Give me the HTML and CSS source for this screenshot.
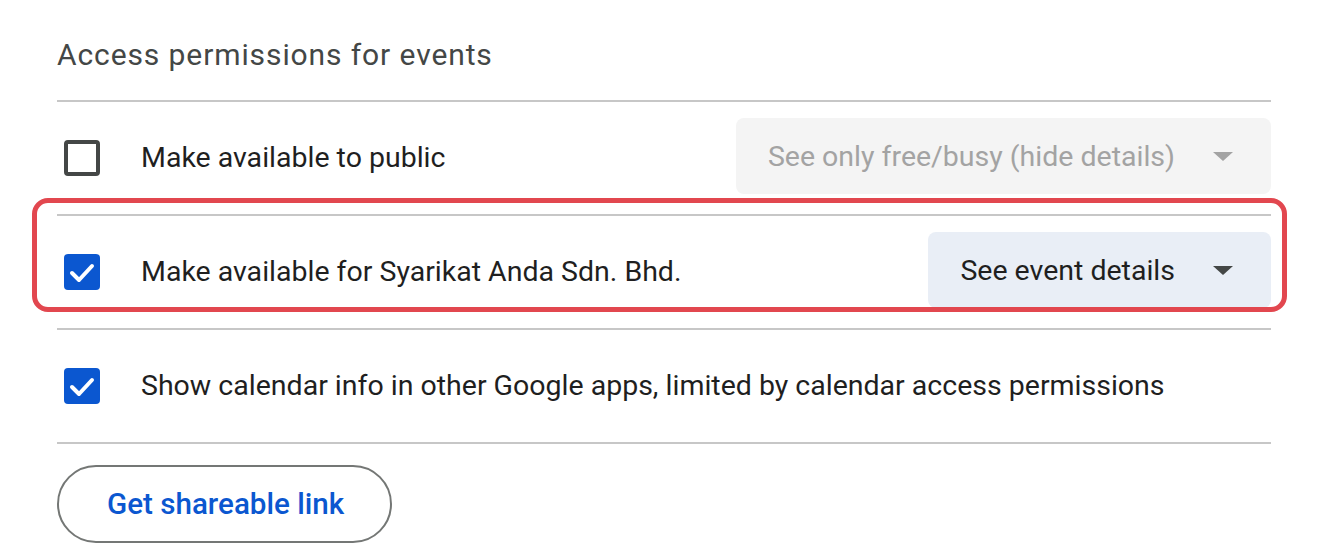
FILE: index.html
```html
<!DOCTYPE html>
<html lang="en">
<head>
<meta charset="utf-8">
<title>Access permissions for events</title>
<link rel="stylesheet" href="styles.css">
</head>
<body>
<section class="panel">
  <h2 class="title">Access permissions for events</h2>

  <div class="row">
    <span class="checkbox"></span>
    <span class="label">Make available to public</span>
    <div class="select select-disabled">
      <span class="select-text">See only free/busy (hide details)</span>
      <span class="caret"></span>
    </div>
  </div>

  <div class="row row-highlight">
    <span class="checkbox checked">
      <svg viewBox="0 0 36 36" width="36" height="36"><polyline points="8,19 15,26 28,12" fill="none" stroke="#fff" stroke-width="4" stroke-linecap="round" stroke-linejoin="round"/></svg>
    </span>
    <span class="label">Make available for Syarikat Anda Sdn. Bhd.</span>
    <div class="select select-active">
      <span class="select-text">See event details</span>
      <span class="caret"></span>
    </div>
  </div>

  <div class="row">
    <span class="checkbox checked">
      <svg viewBox="0 0 36 36" width="36" height="36"><polyline points="8,19 15,26 28,12" fill="none" stroke="#fff" stroke-width="4" stroke-linecap="round" stroke-linejoin="round"/></svg>
    </span>
    <span class="label">Show calendar info in other Google apps, limited by calendar access permissions</span>
  </div>

  <div class="footer">
    <button class="link-btn" type="button">Get shareable link</button>
  </div>
</section>
</body>
</html>
```

FILE: styles.css
```css
* { box-sizing: border-box; }

html, body {
  margin: 0;
  padding: 0;
  background: #ffffff;
}

body {
  font-family: Roboto, "Noto Sans", Arial, sans-serif;
  color: #1f1f1f;
  width: 1320px;
  height: 560px;
  overflow: hidden;
}

.panel {
  margin-left: 57px;
  width: 1214px;
}

.title {
  margin: 0;
  padding-top: 37px;
  height: 100px;
  font-size: 30px;
  line-height: 36px;
  letter-spacing: 0.9px;
  font-weight: 400;
  color: #444746;
}

.row {
  display: flex;
  align-items: center;
  height: 114px;
  border-top: 2px solid #c7c7c7;
}

.row-highlight {
  position: relative;
}

.row-highlight::after {
  content: "";
  position: absolute;
  top: -18px;
  left: -25px;
  right: -16px;
  bottom: 16px;
  border: 5px solid #e2474f;
  border-radius: 16px;
  pointer-events: none;
}

.checkbox {
  flex: none;
  width: 36px;
  height: 36px;
  margin-left: 7px;
  margin-right: 41px;
  border: 4px solid #444746;
  border-radius: 4px;
  display: flex;
  align-items: center;
  justify-content: center;
}

.checkbox.checked {
  border: none;
  background: #0b57d0;
}

.label {
  font-size: 28.5px;
  line-height: 36px;
  white-space: nowrap;
}

.select {
  margin-left: auto;
  margin-top: -4px;
  height: 76px;
  display: flex;
  align-items: center;
  padding: 0 38px 0 32px;
  border-radius: 8px;
  font-size: 28.5px;
}

.select-text {
  white-space: nowrap;
}

.select-disabled {
  background: #f4f4f4;
  color: #a3a3a3;
}

.select-active {
  background: #e9eef6;
  color: #1f1f1f;
}

.caret {
  margin-left: 38px;
  width: 0;
  height: 0;
  border-left: 10px solid transparent;
  border-right: 10px solid transparent;
  border-top: 9px solid #444746;
}

.select-disabled .caret {
  border-top-color: #a3a3a3;
}

.footer {
  border-top: 2px solid #c7c7c7;
  padding-top: 21px;
}

.link-btn {
  height: 78px;
  padding: 0 46px 0 48px;
  border: 2px solid #747775;
  border-radius: 39px;
  background: #ffffff;
  font-family: Roboto, "Noto Sans", Arial, sans-serif;
  font-size: 29.6px;
  font-weight: 500;
  color: #0b57d0;
  cursor: pointer;
}
```
